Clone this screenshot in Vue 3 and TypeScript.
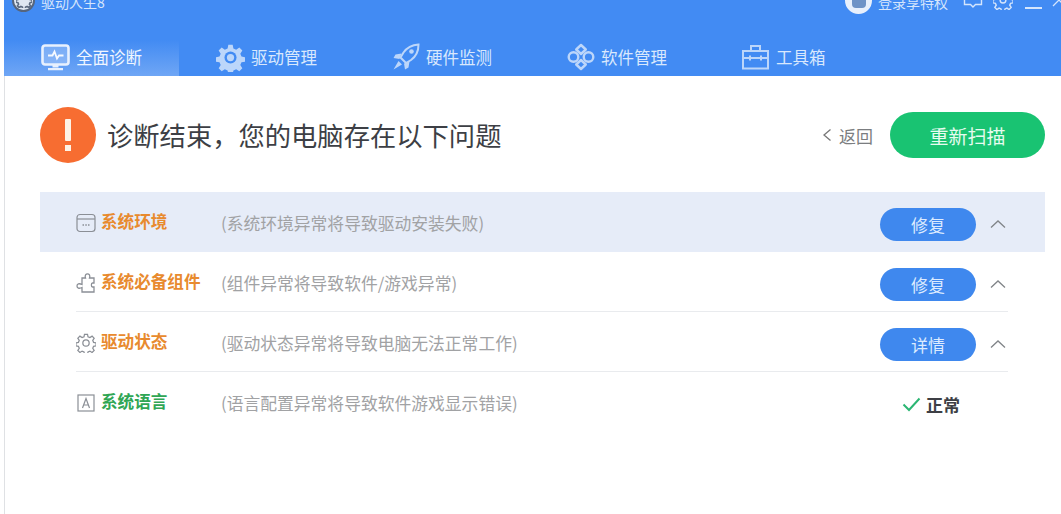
<script setup lang="ts">
interface Tab { label: string; icon: string }
interface Row { icon: string; name: string; desc: string; tone: string; action?: string; highlight?: boolean }

const tabs: Tab[] = [
  { label: '全面诊断', icon: 'monitor' },
  { label: '驱动管理', icon: 'gear' },
  { label: '硬件监测', icon: 'rocket' },
  { label: '软件管理', icon: 'flower' },
  { label: '工具箱', icon: 'box' },
]

const rows: Row[] = [
  { icon: 'window', name: '系统环境', desc: '(系统环境异常将导致驱动安装失败)', tone: 'warn', action: '修复', highlight: true },
  { icon: 'puzzle', name: '系统必备组件', desc: '(组件异常将导致软件/游戏异常)', tone: 'warn', action: '修复' },
  { icon: 'cog', name: '驱动状态', desc: '(驱动状态异常将导致电脑无法正常工作)', tone: 'warn', action: '详情' },
  { icon: 'lang', name: '系统语言', desc: '(语言配置异常将导致软件游戏显示错误)', tone: 'ok' },
]

const gearPath = 'M10.2 1.5h3.6l.6 3 2.3 1 2.6-1.7 2.5 2.5-1.7 2.6 1 2.3 3 .6v3.6l-3 .6-1 2.3 1.7 2.6-2.5 2.5-2.6-1.7-2.3 1-.6 3h-3.6l-.6-3-2.3-1-2.6 1.7-2.5-2.5 1.7-2.6-1-2.3-3-.6v-3.6l3-.6 1-2.3-1.7-2.6 2.5-2.5 2.6 1.7 2.3-1z'
</script>

<template>
  <div class="page">
    <header class="head">
      <div class="titlebar">
        <div class="brand">
          <span class="logo">
            <svg viewBox="0 0 24 24" width="16" height="16"><path :d="gearPath" fill="none" stroke="#5b6a80" stroke-width="2.4"/></svg>
          </span>
          <span class="brand-name">驱动人生8</span>
        </div>
        <div class="sys">
          <span class="avatar"><span class="avatar-in"></span></span>
          <span class="login">登录享特权</span>
          <svg class="msg" viewBox="0 0 20 18" width="20" height="18"><path d="M1.5 1.5h17v12h-6l-2.500 2.500-2.500-2.500h-6z" fill="none" stroke="#d5e5fc" stroke-width="1.4"/><path d="M10 5v3" stroke="#d5e5fc" stroke-width="1.5"/></svg>
          <svg class="cog-s" viewBox="0 0 24 24" width="20" height="20"><path :d="gearPath" fill="none" stroke="#d5e5fc" stroke-width="1.7"/><circle cx="12" cy="12" r="3.500" fill="none" stroke="#d5e5fc" stroke-width="1.7"/></svg>
          <span class="min"></span>
          <svg class="close" viewBox="0 0 14 14" width="14" height="14"><path d="M1 1l12 12M13 1L1 13" stroke="#d5e5fc" stroke-width="1.3"/></svg>
        </div>
      </div>
      <nav class="tabs">
        <div v-for="(t, i) in tabs" :key="t.label" class="tab" :class="{ active: i === 0 }">
          <span class="tab-icon">
            <svg v-if="t.icon === 'monitor'" viewBox="0 0 29 27" width="29" height="27">
              <rect x="1.500" y="1.500" width="26" height="19" rx="2.500" fill="#e6f0fe" fill-opacity=".3" stroke="#e8f1fe" stroke-width="2.600"/>
              <path d="M7 11.500h4.500l2-4 2.500 7 2-3h4.500" fill="none" stroke="#f5f9ff" stroke-width="1.800"/>
              <path d="M11.500 20.500h6v3h-6zM7 24h15v2.200H7z" fill="#e8f1fe"/>
            </svg>
            <svg v-else-if="t.icon === 'gear'" viewBox="0 0 24 24" width="29" height="29">
              <path :d="gearPath" fill="#bcd6fa"/>
              <circle cx="12" cy="12" r="5" fill="#428bf3"/>
              <circle cx="12" cy="12" r="3" fill="#bcd6fa"/>
            </svg>
            <svg v-else-if="t.icon === 'rocket'" viewBox="0 0 28 28" width="28" height="28">
              <path d="M26.500 1.500c-6.500.5-11.500 3-15 8l-3 5 5.500 5.500 5-3c5-3.500 7.500-8.500 7.500-15.500z" fill="none" stroke="#bcd6fa" stroke-width="2"/>
              <circle cx="19.500" cy="8.500" r="2.300" fill="#bcd6fa"/>
              <path d="M9.500 10.500l-6 1-2 3.500 6 1zM17.500 18.500l-1 6-3.500 2-1-6z" fill="#bcd6fa"/>
              <path d="M6.500 18l-5 8.500 8.500-5z" fill="#bcd6fa"/>
            </svg>
            <svg v-else-if="t.icon === 'flower'" viewBox="0 0 28 28" width="28" height="28" fill="none" stroke="#bcd6fa" stroke-width="2.400">
              <path d="M14 2l4.800 4.500L14 11 9.200 6.500zM14 17l4.800 4.500L14 26l-4.800-4.500z" stroke-linejoin="round"/>
              <circle cx="6.500" cy="14" r="4.800"/>
              <circle cx="21.500" cy="14" r="4.800"/>
            </svg>
            <svg v-else viewBox="0 0 27 26" width="27" height="26" fill="none" stroke="#bcd6fa" stroke-width="2">
              <rect x="1" y="7" width="25" height="17.500"/>
              <path d="M9 7V2h9v5M1 14h25M8 11.500v5M19 11.500v5"/>
            </svg>
          </span>
          <span class="tab-label">{{ t.label }}</span>
        </div>
      </nav>
    </header>

    <main class="content">
      <section class="summary">
        <div class="alert-icon"><span class="bang-bar"></span><span class="bang-dot"></span></div>
        <h1 class="summary-title">诊断结束，您的电脑存在以下问题</h1>
        <a class="back">
          <svg viewBox="0 0 10 14" width="10" height="14"><path d="M8.500 1.500L2 7l6.500 5.500" fill="none" stroke="#777" stroke-width="1.300"/></svg>
          返回
        </a>
        <button class="rescan">重新扫描</button>
      </section>

      <section class="list">
        <div v-for="r in rows" :key="r.name" class="row" :class="{ highlight: r.highlight }">
          <div class="row-in">
            <span class="row-icon">
              <svg v-if="r.icon === 'window'" viewBox="0 0 20 20" width="20" height="20" fill="none" stroke="#8b8f96" stroke-width="1.200">
                <rect x="1" y="1.500" width="18" height="17" rx="3"/>
                <path d="M1 6h18"/>
                <path d="M6.500 12h1.500M9.300 12h1.500M12 12h1.500" stroke-width="1.300"/>
              </svg>
              <svg v-else-if="r.icon === 'puzzle'" viewBox="0 0 20 20" width="20" height="20" fill="none" stroke="#8b8f96" stroke-width="1.300">
                <path d="M6 5h3.500c-1-3 .5-4.200 2-4.200s3 1.200 2 4.200H18v5h-1.500c-1.500 0-1.500 4 0 4H18v5H6v-4.500c-3 1.500-5 .5-5-1.500s2-3 5-1.500z"/>
              </svg>
              <svg v-else-if="r.icon === 'cog'" viewBox="0 0 24 24" width="20" height="20" fill="none" stroke="#8b8f96" stroke-width="1.500">
                <path :d="gearPath"/>
                <circle cx="12" cy="12" r="3.800"/>
              </svg>
              <svg v-else viewBox="0 0 20 20" width="20" height="20" fill="none" stroke="#8b8f96" stroke-width="1.200">
                <rect x="2" y="2" width="16" height="16"/>
                <path d="M6.500 15L10 5.500 13.500 15M7.700 12h4.600"/>
              </svg>
            </span>
            <span class="row-name" :class="r.tone">{{ r.name }}</span>
            <span class="row-desc">{{ r.desc }}</span>
            <template v-if="r.action">
              <button class="action">{{ r.action }}</button>
              <svg class="chev" viewBox="0 0 16 10" width="16" height="10"><path d="M1 8.500L8 2l7 6.500" fill="none" stroke="#808488" stroke-width="1.300"/></svg>
            </template>
            <span v-else class="status">
              <svg viewBox="0 0 19 15" width="19" height="15"><path d="M1.500 7.500l5.500 5.500L17.500 1.500" fill="none" stroke="#2bb673" stroke-width="2"/></svg>
              <b>正常</b>
            </span>
          </div>
        </div>
      </section>
    </main>
  </div>
</template>

<style>
html, body { margin: 0; background: #fff; overflow: hidden; }
</style>

<style scoped>
.page {
  width: 1057px;
  height: 514px;
  margin-left: 4px;
  overflow: hidden;
  background: #fff;
  display: flex;
  flex-direction: column;
  font-family: "Noto Sans CJK SC", "Noto Sans", sans-serif;
}
.head {
  flex: none;
  height: 76px;
  background: #428bf3;
  overflow: hidden;
}
.titlebar {
  height: 36px;
  margin-top: -18px;
  display: flex;
  align-items: center;
  justify-content: space-between;
  color: #d5e5fc;
}
.brand { display: flex; align-items: center; padding-left: 8px; }
.logo {
  width: 23px;
  height: 23px;
  border-radius: 50%;
  background: #dfe7f2;
  border: 2px solid #56657d;
  box-sizing: border-box;
  display: flex;
  align-items: center;
  justify-content: center;
}
.brand-name { margin: 3px 0 0 6px; font-size: 14px; }
.sys { display: flex; align-items: center; }
.avatar {
  width: 27px;
  height: 27px;
  border-radius: 50%;
  background: #e8f0fc;
  display: flex;
  align-items: center;
  justify-content: center;
}
.avatar-in { width: 14px; height: 16px; background: #6f93c6; border-radius: 4px; }
.login { margin: 3px 0 0 6px; font-size: 14px; width: 72px; white-space: nowrap; }
.msg { margin-left: 13px; }
.cog-s { margin-left: 10px; }
.min { display: block; width: 17px; height: 2px; background: #d5e5fc; margin: 15px 0 0 12px; }
.close { margin: 0 -5px 0 10px; }

.tabs { display: flex; margin-top: 18px; height: 40px; }
.tab {
  width: 175px;
  height: 40px;
  box-sizing: border-box;
  padding: 2px 0 0 37px;
  display: flex;
  align-items: center;
  color: #d9e8fd;
}
.tab.active { background: linear-gradient(180deg, #428bf3 10%, #6fa6f5 100%); color: #f0f6ff; }
.tab-icon { width: 29px; height: 29px; display: flex; align-items: center; justify-content: center; }
.tab-label { margin-left: 6px; font-size: 16.500px; line-height: 1; }

.content {
  flex: 1;
  border-left: 1px solid #dfe1e4;
  padding: 31px 16px 0 35px;
}
.summary { display: flex; align-items: center; height: 56px; }
.alert-icon {
  width: 56px;
  height: 56px;
  border-radius: 50%;
  background: #f76d31;
  display: flex;
  flex-direction: column;
  align-items: center;
  justify-content: center;
}
.bang-bar { width: 6px; height: 22px; background: #fdf3e6; border-radius: 1px; }
.bang-dot { width: 6px; height: 6px; background: #fdf3e6; margin-top: 4px; }
.summary-title {
  margin: -2px 0 0 11px;
  flex: 1;
  font-size: 26.300px;
  font-weight: 400;
  color: #3d3f45;
}
.back {
  display: flex;
  align-items: center;
  gap: 7px;
  font-size: 17px;
  color: #7b7d80;
}
.rescan {
  width: 155px;
  height: 46px;
  margin-left: 17px;
  border: 0;
  border-radius: 23px;
  background: #19c372;
  color: #e6fbef;
  font: inherit;
  font-size: 19px;
}
.list { margin-top: 29px; }
.row { padding: 0 37px 0 36px; }
.row.highlight { background: #e6ecf8; }
.row-in {
  height: 60px;
  box-sizing: border-box;
  border-bottom: 1px solid #e9ebee;
  display: grid;
  grid-template-columns: 25px 120px 659px 96px 32px;
  align-items: center;
}
.highlight .row-in { border-bottom-color: #e6ecf8; }
.row:last-child .row-in { border-bottom-color: transparent; }
.row-icon { display: flex; margin-top: 2px; }
.row-name { font-size: 16.600px; font-weight: 700; white-space: nowrap; margin-top: -1px; }
.warn { color: #e88a2e; }
.ok { color: #2fa654; }
.row-desc { font-size: 16.800px; color: #a1a2a4; white-space: nowrap; margin-top: 2px; }
.action {
  height: 33px;
  margin-top: 5px;
  border: 0;
  border-radius: 17px;
  background: #3f88ee;
  color: #dcebff;
  font: inherit;
  font-size: 17px;
  padding: 0;
}
.chev { justify-self: end; margin: 5px 2px 0 0; }
.status {
  grid-column: 4 / span 2;
  display: flex;
  align-items: center;
  gap: 5px;
  padding-left: 22px;
  margin-top: 5px;
  font-size: 17px;
  color: #3d3f45;
}
</style>
